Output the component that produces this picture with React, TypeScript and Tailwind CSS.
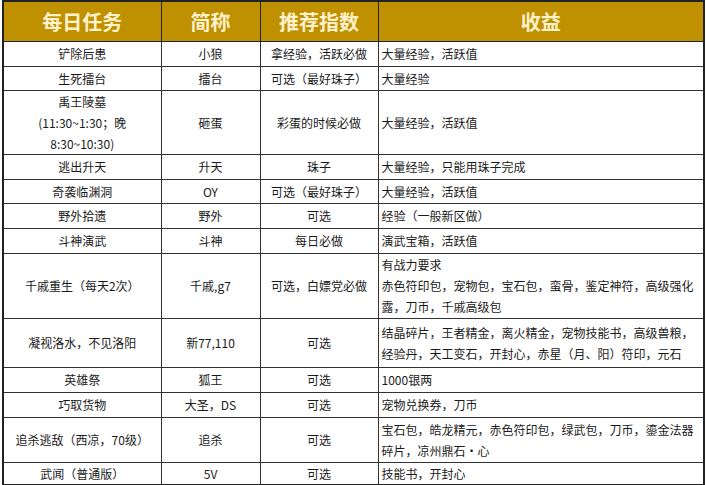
import React from "react";

type Row = {
  h: number;
  a: React.ReactNode;
  b: string;
  c: string;
  d: React.ReactNode;
};

const rows: Row[] = [
  { h: 25, a: "铲除后患", b: "小狼", c: "拿经验，活跃必做", d: "大量经验，活跃值" },
  { h: 24, a: "生死擂台", b: "擂台", c: "可选（最好珠子）", d: "大量经验" },
  {
    h: 63,
    a: (
      <>
        禹王陵墓
        <br />
        (11:30~1:30；晚
        <br />
        8:30~10:30)
      </>
    ),
    b: "砸蛋",
    c: "彩蛋的时候必做",
    d: "大量经验，活跃值",
  },
  { h: 25, a: "逃出升天", b: "升天", c: "珠子", d: "大量经验，只能用珠子完成" },
  { h: 24, a: "奇袭临渊洞", b: "OY", c: "可选（最好珠子）", d: "大量经验，活跃值" },
  { h: 25, a: "野外拾遗", b: "野外", c: "可选", d: "经验（一般新区做）" },
  { h: 25, a: "斗神演武", b: "斗神", c: "每日必做", d: "演武宝箱，活跃值" },
  {
    h: 65,
    a: "千戚重生（每天2次）",
    b: "千戚,g7",
    c: "可选，白嫖党必做",
    d: (
      <>
        有战力要求
        <br />
        赤色符印包，宠物包，宝石包，蛮骨，鉴定神符，高级强化
        <br />
        露，刀币，千戚高级包
      </>
    ),
  },
  {
    h: 49,
    a: "凝视洛水，不见洛阳",
    b: "新77,110",
    c: "可选",
    d: (
      <>
        结晶碎片，王者精金，离火精金，宠物技能书，高级兽粮，
        <br />
        经验丹，天工变石，开封心，赤星（月、阳）符印，元石
      </>
    ),
  },
  { h: 25, a: "英雄祭", b: "狐王", c: "可选", d: "1000银两" },
  { h: 25, a: "巧取货物", b: "大圣，DS", c: "可选", d: "宠物兑换券，刀币" },
  {
    h: 45,
    a: "追杀逃敌（西凉，70级）",
    b: "追杀",
    c: "可选",
    d: (
      <>
        宝石包，皓龙精元，赤色符印包，绿武包，刀币，鎏金法器
        <br />
        碎片，凉州鼎石·心
      </>
    ),
  },
  { h: 20, a: "武闻（普通版）", b: "5V", c: "可选", d: "技能书，开封心" },
];

export default function App() {
  return (
    <div className="w-[706px] h-[485px] bg-white pl-[2px] overflow-hidden">
      <table
        className="table-fixed border-collapse border-2 border-[#222] text-[12px] leading-[21px] text-[#1a1a1a]"
        style={{ fontFamily: '"Microsoft YaHei", "Noto Sans CJK SC", "Noto Sans", sans-serif' }}
      >
        <colgroup>
          <col className="w-[158px]" />
          <col className="w-[99px]" />
          <col className="w-[118px]" />
          <col className="w-[326px]" />
        </colgroup>
        <thead>
          <tr className="h-[40px] bg-[#bf9000] text-[#fff2cc] text-[20px] font-bold">
            <th className="border border-[#222] text-center">每日任务</th>
            <th className="border border-[#222] text-center">简称</th>
            <th className="border border-[#222] text-center">推荐指数</th>
            <th className="border border-[#222] text-center">收益</th>
          </tr>
        </thead>
        <tbody>
          {rows.map((r, i) => (
            <tr key={i} style={{ height: r.h }}>
              <td className="border border-[#333] text-center whitespace-nowrap p-0">{r.a}</td>
              <td className="border border-[#333] text-center whitespace-nowrap p-0">{r.b}</td>
              <td className="border border-[#333] text-center whitespace-nowrap p-0">{r.c}</td>
              <td className="border border-[#333] text-left whitespace-nowrap py-0 pl-[3px] pr-0">{r.d}</td>
            </tr>
          ))}
        </tbody>
      </table>
    </div>
  );
}
